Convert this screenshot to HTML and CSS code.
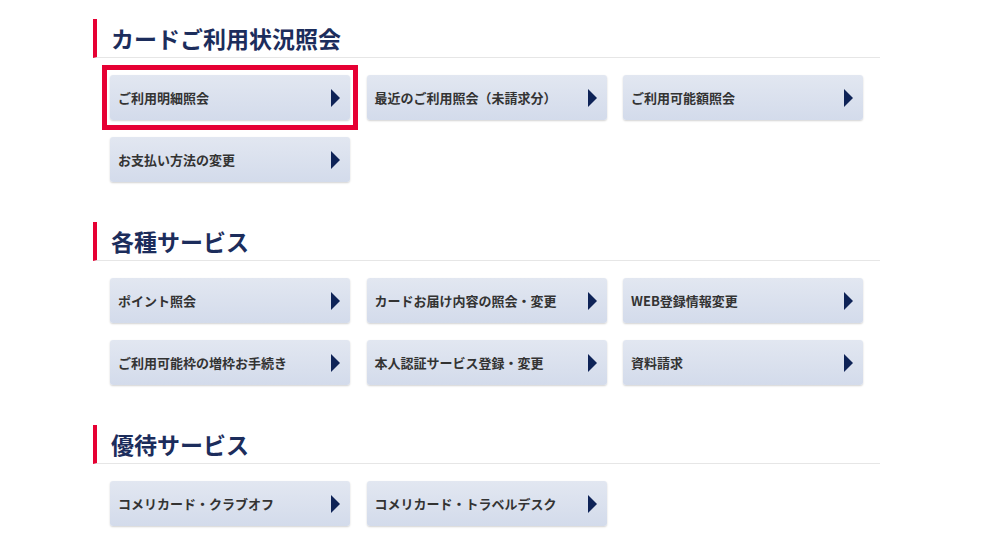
FILE: index.html
```html
<!DOCTYPE html>
<html lang="ja">
<head>
<meta charset="utf-8">
<title>カードご利用状況照会</title>
<link rel="stylesheet" href="styles.css">
</head>
<body>
<main class="page">
  <section class="sec">
    <h2 class="sec-title">カードご利用状況照会</h2>
    <div class="grid">
      <a class="btn is-current" href="#"><span>ご利用明細照会</span><svg class="arr" viewBox="0 0 9 18"><polygon points="0,0 9,9 0,18"/></svg></a>
      <a class="btn" href="#"><span>最近のご利用照会（未請求分）</span><svg class="arr" viewBox="0 0 9 18"><polygon points="0,0 9,9 0,18"/></svg></a>
      <a class="btn" href="#"><span>ご利用可能額照会</span><svg class="arr" viewBox="0 0 9 18"><polygon points="0,0 9,9 0,18"/></svg></a>
      <a class="btn" href="#"><span>お支払い方法の変更</span><svg class="arr" viewBox="0 0 9 18"><polygon points="0,0 9,9 0,18"/></svg></a>
    </div>
  </section>
  <section class="sec">
    <h2 class="sec-title">各種サービス</h2>
    <div class="grid">
      <a class="btn" href="#"><span>ポイント照会</span><svg class="arr" viewBox="0 0 9 18"><polygon points="0,0 9,9 0,18"/></svg></a>
      <a class="btn" href="#"><span>カードお届け内容の照会・変更</span><svg class="arr" viewBox="0 0 9 18"><polygon points="0,0 9,9 0,18"/></svg></a>
      <a class="btn" href="#"><span>WEB登録情報変更</span><svg class="arr" viewBox="0 0 9 18"><polygon points="0,0 9,9 0,18"/></svg></a>
      <a class="btn" href="#"><span>ご利用可能枠の増枠お手続き</span><svg class="arr" viewBox="0 0 9 18"><polygon points="0,0 9,9 0,18"/></svg></a>
      <a class="btn" href="#"><span>本人認証サービス登録・変更</span><svg class="arr" viewBox="0 0 9 18"><polygon points="0,0 9,9 0,18"/></svg></a>
      <a class="btn" href="#"><span>資料請求</span><svg class="arr" viewBox="0 0 9 18"><polygon points="0,0 9,9 0,18"/></svg></a>
    </div>
  </section>
  <section class="sec">
    <h2 class="sec-title">優待サービス</h2>
    <div class="grid">
      <a class="btn" href="#"><span>コメリカード・クラブオフ</span><svg class="arr" viewBox="0 0 9 18"><polygon points="0,0 9,9 0,18"/></svg></a>
      <a class="btn" href="#"><span>コメリカード・トラベルデスク</span><svg class="arr" viewBox="0 0 9 18"><polygon points="0,0 9,9 0,18"/></svg></a>
    </div>
  </section>
</main>
</body>
</html>
```
FILE: styles.css
```css
* { box-sizing: border-box; }
html, body { margin: 0; padding: 0; background: #fff; }
body {
  font-family: "Noto Sans CJK JP", "Noto Sans", sans-serif;
  color: #333;
}
.page {
  width: 787px;
  margin-left: 93px;
  padding-top: 19px;
}
.sec { margin-bottom: 40px; }
.sec-title {
  margin: 0;
  height: 39px;
  display: flex;
  align-items: center;
  padding-left: 14px;
  border-left: 4px solid #e60033;
  border-bottom: 1px solid #e6e6e6;
  font-size: 23px;
  font-weight: 700;
  color: #1c2d5c;
}
.grid {
  margin: 17px 0 0 17px;
  display: grid;
  grid-template-columns: repeat(3, 240px);
  column-gap: 16.5px;
  row-gap: 17px;
}
.btn {
  position: relative;
  height: 45px;
  display: flex;
  align-items: center;
  justify-content: space-between;
  padding: 0 10px 0 8px;
  border-radius: 3px;
  background: linear-gradient(#e2e7f1, #d3dbeb);
  box-shadow: 0 1px 2px rgba(0, 0, 0, 0.18);
  text-decoration: none;
  color: #333;
  font-size: 13px;
  font-weight: 700;
}
.arr { width: 9px; height: 18px; fill: #0e2357; flex: none; }
.btn.is-current::after {
  content: "";
  position: absolute;
  top: -10px;
  bottom: -10px;
  left: -8px;
  right: -8px;
  border: 5px solid #e60033;
}
```
